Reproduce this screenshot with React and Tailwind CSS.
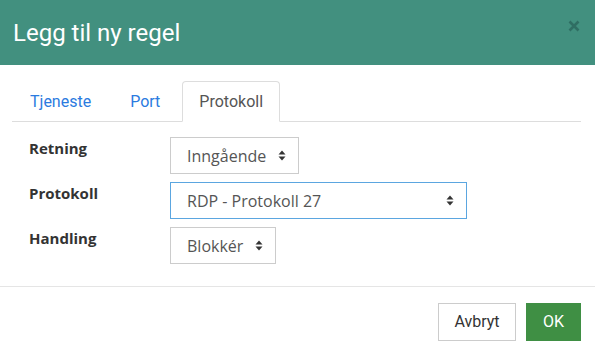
import React from 'react';

const Arrows = () => (
    <svg width="8" height="11" viewBox="0 0 8 11" className="shrink-0">
        <path d="M4 0.5 L7.5 4.5 L0.5 4.5 Z" fill="#333" />
        <path d="M4 10.5 L7.5 6.5 L0.5 6.5 Z" fill="#333" />
    </svg>
);

const FakeSelect = ({ value, width, focused }) => (
    <div
        className={`flex items-center justify-between h-[37px] pl-[16px] pr-[12px] border bg-white text-[16px] text-[#555] ${width} ${focused ? 'border-[#5ba6e0]' : 'border-[#ccc]'}`}
        style={{ fontFamily: '"Open Sans", sans-serif' }}
    >
        <span>{value}</span>
        <Arrows />
    </div>
);

const rows = [
    { label: 'Retning', value: 'Inngående', width: 'w-[129px]' },
    { label: 'Protokoll', value: 'RDP - Protokoll 27', width: 'w-[297px]', focused: true },
    { label: 'Handling', value: 'Blokkér', width: 'w-[106px]' },
];

const App = () => {
    const tabs = ['Tjeneste', 'Port', 'Protokoll'];

    return (
        <div className="w-[595px] h-[353px] bg-white overflow-hidden" style={{ fontFamily: 'Roboto, sans-serif' }}>
            <div className="h-[65px] bg-[#42907f] flex items-center justify-between pl-[13px] pr-[15px]">
                <h1 className="text-[24px] text-white leading-none">Legg til ny regel</h1>
                <svg width="12" height="12" viewBox="0 0 12 12" className="self-start mt-[20px]">
                    <path d="M1.5 1.5 L10.5 10.5 M10.5 1.5 L1.5 10.5" stroke="#2f6e63" strokeWidth="2.6" />
                </svg>
            </div>

            <div className="pl-[12px] pr-[14px] pt-[16px] pb-[22px] border-b border-[#e5e5e5]">
                <div className="flex gap-[5px] pl-px border-b border-[#ddd] h-[41px]">
                    {tabs.map((tab, i) => (
                        <div
                            key={tab}
                            className={`px-[16px] flex items-center text-[16px] rounded-t-[4px] border -mb-px ${i === 2 ? 'bg-white border-[#ddd] border-b-white text-[#555]' : 'border-transparent text-[#2b7be0]'}`}
                        >
                            {tab}
                        </div>
                    ))}
                </div>

                <div className="flex flex-col gap-[8px] pt-[15px]">
                    {rows.map((row) => (
                        <div key={row.label} className="flex items-start">
                            <div
                                className="w-[158px] pl-[17px] text-[15px] leading-[22px] font-bold text-[#333]"
                                style={{ fontFamily: '"Open Sans", sans-serif' }}
                            >
                                {row.label}
                            </div>
                            <FakeSelect value={row.value} width={row.width} focused={row.focused} />
                        </div>
                    ))}
                </div>
            </div>

            <div className="flex justify-end gap-[10px] pt-[16px] pr-[14px]">
                <button className="h-[38px] w-[78px] border border-[#ccc] bg-white text-[16px] text-[#333]">Avbryt</button>
                <button className="h-[38px] w-[55px] bg-[#3f8f44] text-[16px] text-white">OK</button>
            </div>
        </div>
    );
};

export default App;
